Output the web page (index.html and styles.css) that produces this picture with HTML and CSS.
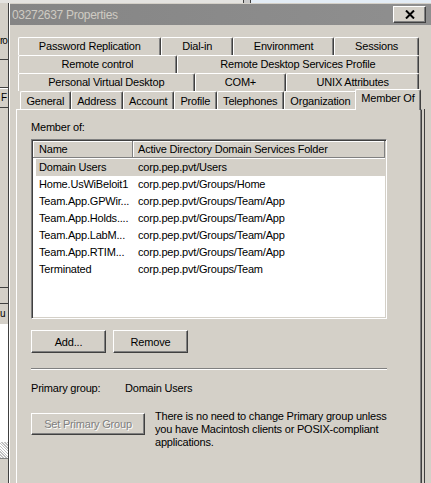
FILE: index.html
```html
<!DOCTYPE html>
<html>
<head>
<meta charset="utf-8">
<link rel="stylesheet" href="styles.css">
</head>
<body>
<div class="screen">
  <div class="topstrip"><div class="ts-a"></div><div class="ts-line"></div><div class="ts-gap"></div><div class="ts-line"></div><div class="ts-c"></div></div>
  <div class="main">
    <div class="bgwin">
      <div class="bg-band h19"></div>
      <div class="bg-band h38 line-b"><span class="frag">ro</span></div>
      <div class="bg-band h28 line-b"></div>
      <div class="bg-band h20 tabish line-b"><span class="frag f-l">F</span></div>
      <div class="bg-band h180 line-b"></div>
      <div class="bg-band h16 line-b"></div>
      <div class="bg-band h20"><span class="frag">u</span></div>
      <div class="bg-band h118 white"></div>
      <div class="bg-band h16 dither"></div>
      <div class="bg-band h14 line-t"></div>
    </div>
    <div class="dialog">
      <div class="titlebar">
        <span class="title">03272637 Properties</span>
        <div class="closebtn"><svg width="10" height="9" viewBox="0 0 10 9"><path d="M1 0.5 L9 8.5 M9 0.5 L1 8.5" stroke="#000" stroke-width="2"/></svg></div>
      </div>
      <div class="dlgbody">
        <div class="tabs">
          <div class="tabrow">
            <div class="tab">Password Replication</div>
            <div class="tab">Dial-in</div>
            <div class="tab">Environment</div>
            <div class="tab">Sessions</div>
          </div>
          <div class="tabrow">
            <div class="tab">Remote control</div>
            <div class="tab">Remote Desktop Services Profile</div>
          </div>
          <div class="tabrow">
            <div class="tab">Personal Virtual Desktop</div>
            <div class="tab">COM+</div>
            <div class="tab">UNIX Attributes</div>
          </div>
          <div class="tabrow front">
            <div class="tab">General</div>
            <div class="tab">Address</div>
            <div class="tab">Account</div>
            <div class="tab">Profile</div>
            <div class="tab">Telephones</div>
            <div class="tab">Organization</div>
            <div class="tab selected">Member Of</div>
          </div>
        </div>
        <div class="panel">
          <div class="label">Member of:</div>
          <div class="listbox">
            <div class="lv-header">
              <div class="hcell c1">Name</div>
              <div class="hcell c2">Active Directory Domain Services Folder</div>
            </div>
            <div class="lv-rows">
              <div class="lv-row sel"><div class="cell c1">Domain Users</div><div class="cell c2">corp.pep.pvt/Users</div></div>
              <div class="lv-row"><div class="cell c1">Home.UsWiBeloit1</div><div class="cell c2">corp.pep.pvt/Groups/Home</div></div>
              <div class="lv-row"><div class="cell c1">Team.App.GPWir...</div><div class="cell c2">corp.pep.pvt/Groups/Team/App</div></div>
              <div class="lv-row"><div class="cell c1">Team.App.Holds....</div><div class="cell c2">corp.pep.pvt/Groups/Team/App</div></div>
              <div class="lv-row"><div class="cell c1">Team.App.LabM...</div><div class="cell c2">corp.pep.pvt/Groups/Team/App</div></div>
              <div class="lv-row"><div class="cell c1">Team.App.RTIM...</div><div class="cell c2">corp.pep.pvt/Groups/Team/App</div></div>
              <div class="lv-row"><div class="cell c1">Terminated</div><div class="cell c2">corp.pep.pvt/Groups/Team</div></div>
            </div>
          </div>
          <div class="btnrow">
            <div class="btn">Add...</div>
            <div class="btn">Remove</div>
          </div>
          <div class="separator"></div>
          <div class="primary">
            <span class="plabel">Primary group:</span>
            <span class="pvalue">Domain Users</span>
          </div>
          <div class="setrow">
            <div class="btn wide disabled">Set Primary Group</div>
            <div class="desc">There is no need to change Primary group unless<br>you have Macintosh clients or POSIX-compliant<br>applications.</div>
          </div>
        </div>
      </div>
    </div>
  </div>
</div>
</body>
</html>
```

FILE: styles.css
```css
* { box-sizing: border-box; }
html, body { margin: 0; padding: 0; }
body {
  font-family: "Liberation Sans", Arial, sans-serif;
  font-size: 11px;
  letter-spacing: -0.2px;
  color: #000;
  background: #d4d0c8;
}
.screen {
  width: 431px;
  height: 483px;
  overflow: hidden;
  display: flex;
  flex-direction: column;
}
.topstrip {
  height: 3px;
  display: flex;
  flex: none;
}
.ts-a { width: 243px; background: #e4e3e0; }
.ts-line { width: 1px; background: #404040; }
.ts-gap { width: 6px; background: #c8c8c8; }
.ts-c { flex: 1; background: #e3ecf5; }

.main {
  flex: 1;
  display: flex;
  min-height: 0;
}
.bgwin {
  width: 8px;
  flex: none;
  display: flex;
  flex-direction: column;
  background: #d4d0c8;
  overflow: hidden;
}
.bg-band { flex: none; overflow: hidden; display: flex; align-items: center; }
.h19 { height: 19px; }
.h38 { height: 38px; }
.h28 { height: 28px; }
.h20 { height: 20px; }
.h180 { height: 180px; }
.h16 { height: 16px; }
.h118 { height: 118px; }
.h14 { height: 14px; }
.line-b { border-bottom: 1px solid #404040; }
.line-t { border-top: 1px solid #808080; }
.tabish { background: #d4d0c8; border-top: 1px solid #fff; }
.white { background: #fff; }
.dither {
  background-color: #fff;
  background-image: repeating-linear-gradient(45deg, #c0c0c0 0 1px, #fff 1px 2px);
}
.frag {
  font-size: 10px;
  letter-spacing: -1px;
  line-height: 12px;
  white-space: nowrap;
}
.f-l { padding-left: 1px; }

.dialog {
  flex: 1;
  min-width: 0;
  display: flex;
  flex-direction: column;
  background: #d4d0c8;
  border-left: 1px solid #404040;
  box-shadow: inset 1px 0 #fff;
  padding-top: 1px;
}
.titlebar {
  height: 21px;
  margin-left: 1px;
  flex: none;
  display: flex;
  align-items: center;
  background: linear-gradient(90deg, #858585, #8f8f8f);
}
.title {
  margin-left: 2px;
  color: #cfcbc3;
  font-size: 12px;
  letter-spacing: -0.3px;
  white-space: nowrap;
}
.closebtn {
  margin-left: auto;
  margin-right: 5px;
  width: 33px;
  height: 17px;
  background: #d4d0c8;
  border: 1px solid;
  border-color: #fff #404040 #404040 #fff;
  box-shadow: inset -1px -1px #808080;
  display: flex;
  align-items: center;
  justify-content: center;
}
.closebtn svg { display: block; }

.dlgbody {
  flex: 1;
  display: flex;
  flex-direction: column;
  padding: 12px 0 0 7px;
  min-height: 0;
}
.tabs {
  margin-left: 2px;
  width: 401px;
  display: flex;
  flex-direction: column;
}
.tabrow {
  height: 18px;
  display: flex;
  align-items: flex-end;
}
.tabrow.front { padding-left: 2px; }
.tab {
  flex: 1 1 auto;
  height: 18px;
  line-height: 17px;
  text-align: center;
  white-space: nowrap;
  background: #d4d0c8;
  border-top: 1px solid #fff;
  border-left: 1px solid #fff;
  border-right: 1px solid #404040;
  box-shadow: inset -1px 0 #808080;
  border-radius: 2px 2px 0 0;
}
.tabrow.front .tab { line-height: 18px; }
.tab.selected {
  height: 21px;
  line-height: 17px !important;
  margin: 0 -2px -1px -2px;
  position: relative;
  z-index: 2;
}

.panel {
  width: 406px;
  flex: 1;
  background: #d4d0c8;
  border-top: 1px solid #fff;
  border-left: 1px solid #fff;
  border-right: 1px solid #404040;
  box-shadow: inset -1px 0 #808080, 2px 0 0 #d4d0c8, 3px 0 0 #404040;
  padding: 11px 0 0 14px;
}
.label { line-height: 13px; }
.listbox {
  margin-top: 5px;
  width: 356px;
  height: 180px;
  background: #fff;
  border: 1px solid;
  border-color: #808080 #fff #fff #808080;
  box-shadow: inset 1px 1px #404040, inset -1px -1px #d4d0c8;
  padding: 1px;
  display: flex;
  flex-direction: column;
}
.lv-header {
  display: flex;
  height: 17px;
  flex: none;
}
.hcell {
  background: #d4d0c8;
  border-right: 1px solid #808080;
  border-bottom: 1px solid #808080;
  box-shadow: inset 1px 1px #fff;
  line-height: 16px;
  padding-left: 5px;
  white-space: nowrap;
  overflow: hidden;
}
.hcell.c1 { width: 100px; padding-left: 6px; }
.hcell.c2 { flex: 1; }
.lv-rows { padding-top: 1px; }
.lv-row {
  display: flex;
  height: 17px;
  line-height: 16px;
  margin-left: 3px;
  white-space: nowrap;
}
.lv-row.sel { background: #d4d0c8; }
.cell { overflow: hidden; }
.cell.c1 { width: 97px; padding-left: 3px; }
.cell.c2 { flex: 1; padding-left: 5px; }

.btnrow {
  margin-top: 11px;
  display: flex;
  gap: 7px;
}
.btn {
  width: 75px;
  height: 23px;
  background: #d4d0c8;
  border: 1px solid;
  border-color: #fff #404040 #404040 #fff;
  box-shadow: inset -1px -1px #808080;
  display: flex;
  align-items: center;
  justify-content: center;
  white-space: nowrap;
}
.btn.wide { width: 114px; height: 22px; flex: none; }
.btn.disabled { color: #808080; text-shadow: 1px 1px #fff; }
.separator {
  margin-top: 15px;
  width: 356px;
  height: 2px;
  border-top: 1px solid #808080;
  border-bottom: 1px solid #fff;
}
.primary {
  margin-top: 12px;
  line-height: 13px;
  display: flex;
}
.plabel { width: 94px; }
.setrow {
  margin-top: 15px;
  display: flex;
  align-items: flex-start;
}
.setrow .btn { margin-top: 3px; }
.desc {
  margin-left: 10px;
  line-height: 13px;
}
```
